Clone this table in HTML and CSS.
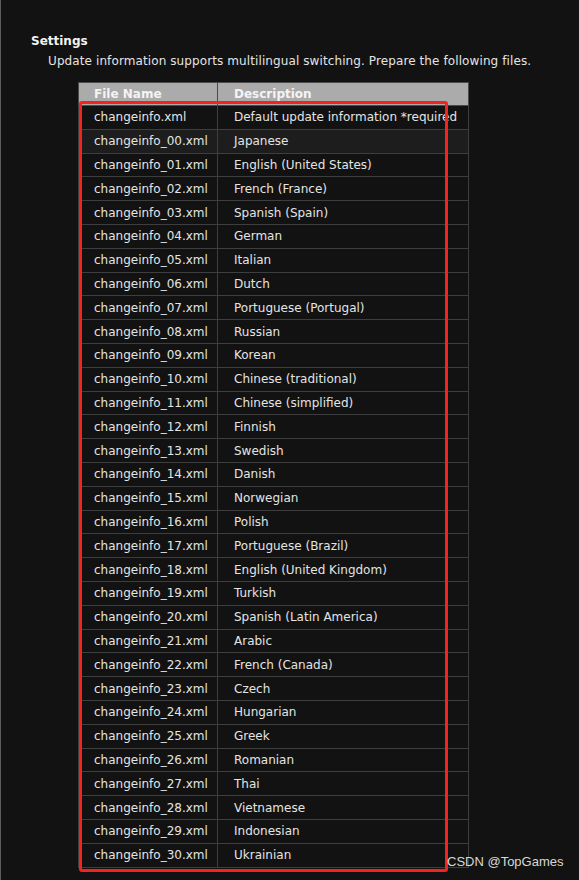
FILE: index.html
```html
<!DOCTYPE html>
<html>
<head>
<meta charset="utf-8">
<link rel="stylesheet" href="styles.css">
</head>
<body>
<div class="page">
  <h3 class="title">Settings</h3>
  <p class="intro">Update information supports multilingual switching. Prepare the following files.</p>
  <div class="table-wrap">
    <table class="files">
      <thead>
        <tr><th class="c1">File Name</th><th class="c2">Description</th></tr>
      </thead>
      <tbody>
        <tr><td>changeinfo.xml</td><td>Default update information *required</td></tr>
        <tr class="hl"><td>changeinfo_00.xml</td><td>Japanese</td></tr>
        <tr><td>changeinfo_01.xml</td><td>English (United States)</td></tr>
        <tr><td>changeinfo_02.xml</td><td>French (France)</td></tr>
        <tr><td>changeinfo_03.xml</td><td>Spanish (Spain)</td></tr>
        <tr><td>changeinfo_04.xml</td><td>German</td></tr>
        <tr><td>changeinfo_05.xml</td><td>Italian</td></tr>
        <tr><td>changeinfo_06.xml</td><td>Dutch</td></tr>
        <tr><td>changeinfo_07.xml</td><td>Portuguese (Portugal)</td></tr>
        <tr><td>changeinfo_08.xml</td><td>Russian</td></tr>
        <tr><td>changeinfo_09.xml</td><td>Korean</td></tr>
        <tr><td>changeinfo_10.xml</td><td>Chinese (traditional)</td></tr>
        <tr><td>changeinfo_11.xml</td><td>Chinese (simplified)</td></tr>
        <tr><td>changeinfo_12.xml</td><td>Finnish</td></tr>
        <tr><td>changeinfo_13.xml</td><td>Swedish</td></tr>
        <tr><td>changeinfo_14.xml</td><td>Danish</td></tr>
        <tr><td>changeinfo_15.xml</td><td>Norwegian</td></tr>
        <tr><td>changeinfo_16.xml</td><td>Polish</td></tr>
        <tr><td>changeinfo_17.xml</td><td>Portuguese (Brazil)</td></tr>
        <tr><td>changeinfo_18.xml</td><td>English (United Kingdom)</td></tr>
        <tr><td>changeinfo_19.xml</td><td>Turkish</td></tr>
        <tr><td>changeinfo_20.xml</td><td>Spanish (Latin America)</td></tr>
        <tr><td>changeinfo_21.xml</td><td>Arabic</td></tr>
        <tr><td>changeinfo_22.xml</td><td>French (Canada)</td></tr>
        <tr><td>changeinfo_23.xml</td><td>Czech</td></tr>
        <tr><td>changeinfo_24.xml</td><td>Hungarian</td></tr>
        <tr><td>changeinfo_25.xml</td><td>Greek</td></tr>
        <tr><td>changeinfo_26.xml</td><td>Romanian</td></tr>
        <tr><td>changeinfo_27.xml</td><td>Thai</td></tr>
        <tr><td>changeinfo_28.xml</td><td>Vietnamese</td></tr>
        <tr><td>changeinfo_29.xml</td><td>Indonesian</td></tr>
        <tr><td>changeinfo_30.xml</td><td>Ukrainian</td></tr>
      </tbody>
    </table>
    <div class="annotation"></div>
  </div>
</div>
<div class="watermark">CSDN @TopGames</div>
</body>
</html>
```
FILE: styles.css
```css
html, body {
  margin: 0;
  padding: 0;
  background: #121212;
  height: 100%;
}
body {
  border-left: 1px solid #5c5c5c;
  box-sizing: border-box;
  font-family: "DejaVu Sans", Verdana, sans-serif;
  color: #e4e4e4;
  position: relative;
  overflow: hidden;
}
.page {
  padding: 34px 0 0 30px;
}
.title {
  margin: 0;
  font-size: 12px;
  font-weight: bold;
  line-height: 14px;
  color: #f2f2f2;
}
.intro {
  margin: 6px 0 0 17px;
  font-size: 12px;
  line-height: 14px;
  letter-spacing: 0.1px;
  color: #e4e4e4;
}
.table-wrap {
  position: relative;
  margin: 14px 0 0 47px;
  width: 391px;
}
.files {
  border-collapse: collapse;
  width: 391px;
  border: 1px solid #4a4a4a;
  font-size: 12px;
}
.files th {
  background: #ababab;
  color: #f4f4f4;
  font-weight: bold;
  text-align: left;
  height: 23px;
  padding: 4px 0 0 15px;
  border: 1px solid #4a4a4a;
  line-height: 14px;
  vertical-align: top;
  box-sizing: border-box;
}
.files th.c1 { width: 139px; }
.files th.c2 { padding-left: 16px; }
.files td {
  height: 22.8px;
  padding: 0 0 0 15px;
  border: 1px solid #3e3e3e;
  line-height: 14px;
  white-space: nowrap;
  color: #e4e4e4;
}
.files td + td { padding-left: 16px; }
.files tr.hl td { background: #1d1d1d; }
.annotation {
  position: absolute;
  left: 1px;
  top: 19px;
  width: 369px;
  height: 771px;
  border: 3px solid #f5231e;
  border-radius: 3px;
  box-sizing: border-box;
}
.watermark {
  position: absolute;
  left: 446px;
  top: 854px;
  font-family: "Liberation Sans", Arial, sans-serif;
  font-size: 13px;
  color: #d8d8d8;
  line-height: 16px;
}
```
